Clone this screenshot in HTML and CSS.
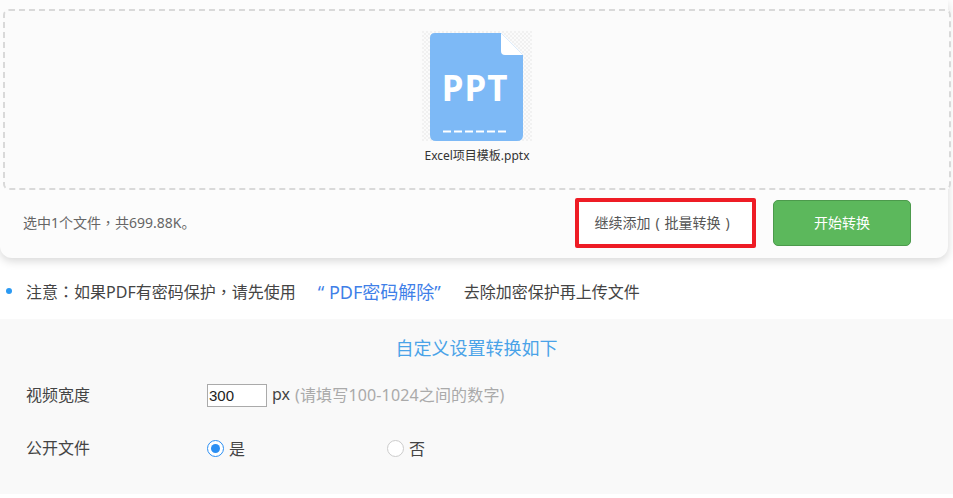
FILE: index.html
```html
<!DOCTYPE html>
<html lang="zh-CN">

<head>
<meta charset="utf-8">
<title>PDF转换</title>
<link rel="stylesheet" href="styles.css">
</head>

<body>
    <div class="uploader">
        <div class="dropArea">
            <svg class="fileIcon" width="110" height="110" viewBox="0 0 110 110">
                <defs>
                    <pattern id="checker" width="4" height="4" patternUnits="userSpaceOnUse">
                        <rect width="4" height="4" fill="#fbfbfb"/>
                        <rect width="2" height="2" fill="#f1f1f1"/>
                        <rect x="2" y="2" width="2" height="2" fill="#f1f1f1"/>
                    </pattern>
                </defs>
                <rect width="110" height="110" fill="url(#checker)"/>
                <path d="M13 2 H79 L101 24 V104 Q101 110 95 110 H14 Q8 110 8 104 V7 Q8 2 13 2 Z" fill="#7db9f6"/>
                <path d="M79 2 L101 24 H83 Q79 24 79 20 Z" fill="#fff"/>
                <path d="M21 100.500 H29 M32 100.500 H40 M43 100.500 H51 M54 100.500 H62 M65 100.500 H73 M76 100.500 H84" stroke="#fff" stroke-width="2" fill="none"/>
                <text x="53" y="70" class="iconLabel" text-anchor="middle">PPT</text>
            </svg>
            <div class="fileName">Excel项目模板.pptx</div>
        </div>
        <div class="actionBar">
            <span class="summary">选中1个文件<span class="midPunct" lang="zh-TW">，</span>共699.88K。</span>
            <button class="addButton">继续添加<span class="parenCell">(</span>批量转换<span class="parenCell">)</span></button>
            <button class="startButton">开始转换</button>
        </div>
    </div>

    <div class="notice">
        <span class="dot"></span>
        <span>注意<span class="midPunct" lang="zh-TW">：</span>如果PDF有密码保护<span class="midPunct" lang="zh-TW">，</span>请先使用</span>
        <a class="noticeLink" href="#">“ PDF密码解除”</a>
        <span>去除加密保护再上传文件</span>
    </div>

    <div class="settings">
        <h2 class="settingsTitle">自定义设置转换如下</h2>
        <div class="settingRow widthRow">
            <label class="settingName">视频宽度</label>
            <input class="widthInput" type="text" value="300">
            <span class="unit">px</span>
            <span class="hint">(请填写100-1024之间的数字)</span>
        </div>
        <div class="settingRow publicRow">
            <label class="settingName">公开文件</label>
            <span class="radioItem"><span class="radio radioOn"></span>是</span>
            <span class="radioItem"><span class="radio"></span>否</span>
        </div>
    </div>
</body>
</html>
```

FILE: styles.css
```css
html, body {
	margin: 0;
	padding: 0;
	background-color: #fff;
}
body {
	font-family: "Noto Sans", "Noto Sans CJK SC", sans-serif;
	color: #444;
	font-size: 16px;
	text-spacing-trim: space-all;
	overflow: hidden;
}
/* centred full-width punctuation, as the TC cut draws it */
.midPunct {
	font-family: "Noto Sans CJK TC", sans-serif;
}
.parenCell {
	display: inline-block;
	width: 14px;
	text-align: center;
}
.uploader {
	width: 948px;
	height: 258px;
	box-sizing: border-box;
	padding: 9px 0 0 3px;
	background-color: #fcfcfc;
	border-radius: 0 0 12px 12px;
	box-shadow: 0 3px 10px rgba(0, 0, 0, 0.16);
}
.dropArea {
	width: 948px;
	height: 181px;
	box-sizing: border-box;
	border: 2px dashed #d9d9d9;
	border-radius: 6px;
	background-color: #fbfbfb;
	display: flex;
	flex-direction: column;
	align-items: center;
	padding-top: 20px;
}
.fileIcon {
	display: block;
}
.iconLabel {
	font-family: "Noto Sans", sans-serif;
	font-size: 35px;
	font-weight: 700;
	fill: #fff;
	letter-spacing: 1px;
}
.fileName {
	margin-top: 6px;
	font-size: 12px;
	line-height: 18px;
	color: #333;
}
.actionBar {
	display: flex;
	align-items: center;
	height: 66px;
	padding-left: 20px;
}
.summary {
	width: 552px;
	font-size: 14px;
	color: #666;
	padding-bottom: 2px;
}
.addButton {
	width: 181px;
	height: 50px;
	box-sizing: border-box;
	border: 4px solid #ee1c25;
	border-radius: 2px;
	background-color: #fff;
	color: #555;
	font-family: inherit;
	font-size: 14px;
	padding: 0 2px 2px 0;
}
.startButton {
	width: 138px;
	height: 46px;
	margin-left: 17px;
	box-sizing: border-box;
	border: 1px solid #4c9a4c;
	border-radius: 5px;
	background-color: #5cb85c;
	color: #fff;
	font-family: inherit;
	font-size: 14px;
	padding: 0 0 2px 0;
}
.notice {
	display: flex;
	align-items: center;
	height: 56px;
	padding: 5px 0 0 6px;
	color: #444;
}
.dot {
	width: 6px;
	height: 6px;
	border-radius: 50%;
	background-color: #2b9af3;
	margin-right: 14px;
}
.noticeLink {
	margin-left: 22px;
	margin-right: 23px;
	font-size: 18px;
	color: #3f7fe8;
	text-decoration: none;
}
.settings {
	height: 175px;
	background-color: #f9f9f9;
	overflow: hidden;
}
.settingsTitle {
	margin: 16px 0 0 0;
	text-align: center;
	font-size: 18px;
	font-weight: normal;
	line-height: 26px;
	color: #4aa3e8;
}
.settingRow {
	display: flex;
	align-items: center;
	height: 24px;
	padding-left: 26px;
}
.widthRow {
	margin-top: 22px;
}
.publicRow {
	margin-top: 29px;
}
.settingName {
	width: 181px;
	font-size: 16px;
	padding-bottom: 2px;
}
.widthInput {
	width: 60px;
	height: 23px;
	box-sizing: border-box;
	border: 1px solid #aaa;
	padding: 0 1px;
	background-color: #fff;
	color: #222;
	font-family: "Liberation Sans", sans-serif;
	font-size: 15px;
}
.unit {
	margin-left: 5px;
	font-size: 16px;
	padding-bottom: 2px;
}
.hint {
	margin-left: 5px;
	font-size: 16px;
	letter-spacing: 0.15px;
	color: #aaa;
	padding-bottom: 2px;
}
.radioItem {
	display: flex;
	align-items: center;
	width: 180px;
	font-size: 16px;
}
.radio {
	width: 15px;
	height: 15px;
	border: 1px solid #ccc;
	border-radius: 50%;
	background-color: #fff;
	margin-right: 5px;
	position: relative;
}
.radioOn {
	border-color: #2b8ff3;
}
.radioOn::after {
	content: "";
	position: absolute;
	left: 3px;
	top: 3px;
	width: 9px;
	height: 9px;
	border-radius: 50%;
	background-color: #2b8ff3;
}
```
